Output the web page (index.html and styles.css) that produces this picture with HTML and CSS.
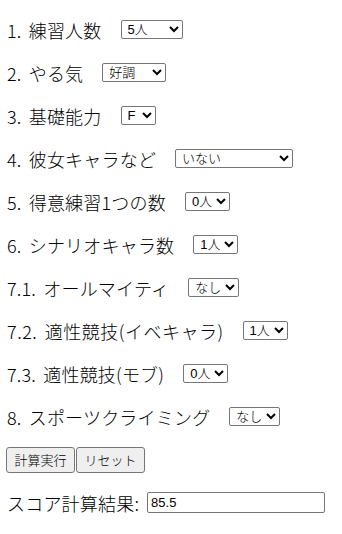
FILE: index.html
```html
<!DOCTYPE html>
<html lang="ja">
<head>
<meta charset="UTF-8">
<meta name="viewport" content="width=device-width, initial-scale=1.0">
<title>スコア計算</title>
<link rel="stylesheet" href="styles.css">
</head>
<body>

<div class="calc">
    <div class="row">
        <label>1. 練習人数</label>
        <select class="w-members">
            <option>5人</option>
        </select>
    </div>
    <div class="row">
        <label>2. やる気</label>
        <select class="w-mood">
            <option>好調</option>
        </select>
    </div>
    <div class="row">
        <label>3. 基礎能力</label>
        <select class="w-rank">
            <option>F</option>
        </select>
    </div>
    <div class="row">
        <label>4. 彼女キャラなど</label>
        <select class="w-girl">
            <option>いない</option>
        </select>
    </div>
    <div class="row">
        <label>5. 得意練習1つの数</label>
        <select class="w-count">
            <option>0人</option>
        </select>
    </div>
    <div class="row">
        <label>6. シナリオキャラ数</label>
        <select class="w-count">
            <option>1人</option>
        </select>
    </div>
    <div class="row">
        <label>7.1. オールマイティ</label>
        <select class="w-flag">
            <option>なし</option>
        </select>
    </div>
    <div class="row">
        <label class="wide">7.2. 適性競技(イベキャラ)</label>
        <select class="w-count">
            <option>1人</option>
        </select>
    </div>
    <div class="row">
        <label>7.3. 適性競技(モブ)</label>
        <select class="w-count">
            <option>0人</option>
        </select>
    </div>
    <div class="row">
        <label>8. スポーツクライミング</label>
        <select class="w-flag">
            <option>なし</option>
        </select>
    </div>

    <div class="row buttons">
        <button type="button">計算実行</button>
        <button type="button">リセット</button>
    </div>

    <div class="row">
        <label class="result-label">スコア計算結果:</label>
        <input type="text" class="result" value="85.5" readonly>
    </div>
</div>

</body>
</html>
```

FILE: styles.css
```css
body {
    font-family: "Noto Sans CJK JP", sans-serif;
    font-size: 18px;
    font-weight: 300;
    color: #000;
    background-color: #fff;
    margin: 0;
    padding: 8px 6px 0 6px;
}
.row {
    display: flex;
    align-items: center;
    height: 43px;
}
.row label {
    margin-right: 19px;
    margin-left: 1px;
    letter-spacing: 0.2px;
    word-spacing: 3px;
}
.row label.wide {
    letter-spacing: 0.5px;
}
select, button, input {
    font-family: "Liberation Sans", "Noto Sans CJK JP", sans-serif;
    font-size: 13px;
    font-weight: 300;
    color: #000;
    box-sizing: border-box;
}
select {
    height: 19px;
    padding: 0 0 0 2px;
    border: 1px solid #767676;
    border-radius: 2px;
    background-color: #fff;
}
.w-members { width: 62px; }
.w-mood { width: 64px; }
.w-rank { width: 35px; }
.w-girl { width: 118px; }
.w-count { width: 45px; }
.w-flag { width: 51px; }
.buttons {
    gap: 1px;
}
.buttons button {
    width: 69px;
    height: 26px;
    padding: 0;
    background-color: #efefef;
    border: 1px solid #767676;
    border-radius: 3px;
}
.row .result-label {
    margin-right: 8px;
    word-spacing: 0;
}
.result {
    width: 178px;
    height: 21px;
    padding: 1px 3px;
    border: 1px solid #767676;
    border-radius: 2px;
}
```
